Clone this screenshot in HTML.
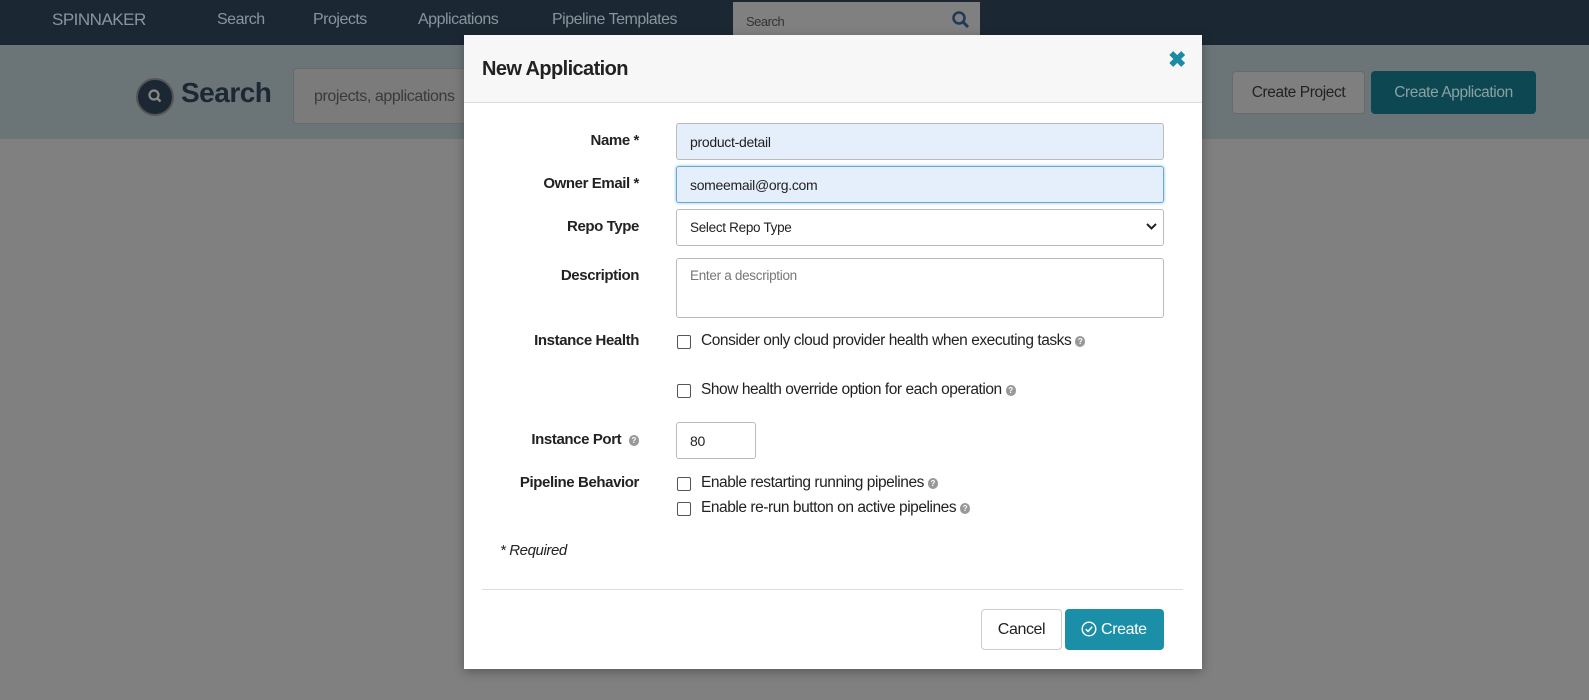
<!DOCTYPE html>
<html><head><style>
*{box-sizing:border-box;margin:0;padding:0}
body{width:1589px;height:700px;overflow:hidden;background:#808080;font-family:"Liberation Sans",sans-serif;position:relative;color:#222}
.nav{position:absolute;left:0;top:0;width:1589px;height:45px;background:#1b2732}
.nav span{position:absolute;top:11px;color:#8a949c;font-size:16px;letter-spacing:-0.5px}
.band{position:absolute;left:0;top:45px;width:1589px;height:94px;background:#6b7578}
.abs{position:absolute}
.lbl{position:absolute;right:950px;font-weight:bold;font-size:15px;letter-spacing:-0.4px;color:#222;text-align:right;white-space:nowrap}
.inp{position:absolute;left:676px;width:488px;height:37px;border:1px solid #bbb;border-radius:3px;font-size:14px;padding:10px 13px;letter-spacing:-0.3px}
.cb{position:absolute;left:677px;width:14px;height:14px;border:1px solid #555;border-radius:2px;background:#fff}
.ct{position:absolute;left:701px;font-size:15.5px;letter-spacing:-0.45px;color:#222;white-space:nowrap}
.q{display:inline-block;width:10px;height:11px;border-radius:5px;background:#999;color:#fff;font-size:8px;text-align:center;line-height:11px;font-weight:bold;vertical-align:1px;margin-left:4px;letter-spacing:0}
</style></head><body>
<div class="nav">
<span style="left:52px;font-size:17px;top:10px">SPINNAKER</span>
<span style="left:217px">Search</span>
<span style="left:313px">Projects</span>
<span style="left:418px">Applications</span>
<span style="left:552px">Pipeline Templates</span>
<div class="abs" style="left:733px;top:2px;width:247px;height:42px;background:#808080"><span style="left:13px;top:12px;font-size:13px;color:#333">Search</span>
<svg class="abs" style="left:218px;top:8px" width="20" height="20" viewBox="0 0 20 20"><circle cx="8" cy="8" r="5.5" fill="none" stroke="#1e3a56" stroke-width="2.5"/><path d="M12 12l5 5" stroke="#1e3a56" stroke-width="3"/></svg></div>
</div>
<div class="band">
<div class="abs" style="left:136px;top:33px;width:38px;height:38px;border-radius:19px;background:#1b2732;border:2px solid #555"></div>
<svg class="abs" style="left:146px;top:42px" width="18" height="18" viewBox="0 0 18 18"><circle cx="8" cy="8" r="4.5" fill="none" stroke="#888" stroke-width="2.2"/><path d="M11 11l3.5 3.5" stroke="#888" stroke-width="2.5"/></svg>
<div class="abs" style="left:181px;top:32px;font-size:28px;font-weight:bold;color:#1b2732;letter-spacing:-0.5px">Search</div>
<div class="abs" style="left:293px;top:23px;width:200px;height:56px;background:#7b7b7b;border:1px solid #6a6a6a;border-radius:4px"><span class="abs" style="left:20px;top:19px;font-size:16px;color:#3a3a3a;letter-spacing:-0.4px">projects, applications</span></div>
<div class="abs" style="left:1232px;top:26px;width:133px;height:43px;background:#7f7f7f;border:1px solid #6a6a6a;border-radius:4px;font-size:15.5px;color:#222;text-align:center;line-height:41px;letter-spacing:-0.4px">Create Project</div>
<div class="abs" style="left:1371px;top:26px;width:165px;height:43px;background:#0d4852;border-radius:4px;font-size:15.5px;color:#8aa0a5;text-align:center;line-height:43px;letter-spacing:-0.4px">Create Application</div>
</div>
<div class="abs" style="left:464px;top:35px;width:738px;height:634px;background:#fff;box-shadow:0 3px 10px rgba(0,0,0,.3)">
<div class="abs" style="left:0;top:0;width:738px;height:68px;background:#f7f7f7;border-bottom:1px solid #ddd"></div>
<div class="abs" style="left:18px;top:23px;font-size:20px;font-weight:bold;color:#222;letter-spacing:-0.6px">New Application</div>
<div class="abs" style="left:704px;top:12px;font-size:22px;font-weight:bold;color:#1a8ba3">✖</div>
</div>
<div class="lbl" style="top:132px">Name *</div>
<div class="inp" style="top:123px;background:#e5effc">product-detail</div>
<div class="lbl" style="top:175px">Owner Email *</div>
<div class="inp" style="top:166px;background:#e5effc;border-color:#66aadd;box-shadow:0 0 3px #8bc">someemail@org.com</div>
<div class="lbl" style="top:218px">Repo Type</div>
<div class="inp" style="top:209px;background:#fff;font-size:13.5px">Select Repo Type<svg class="abs" style="right:6px;top:13px" width="11" height="8" viewBox="0 0 11 8"><path d="M1 1l4.5 4.5L10 1" fill="none" stroke="#222" stroke-width="2"/></svg></div>
<div class="lbl" style="top:267px">Description</div>
<div class="inp" style="top:258px;height:60px;background:#fff;color:#777;font-size:13.5px;padding-top:9px">Enter a description</div>
<div class="lbl" style="top:332px">Instance Health</div>
<div class="cb" style="top:335px"></div><div class="ct" style="top:332px">Consider only cloud provider health when executing tasks<span class="q">?</span></div>
<div class="cb" style="top:384px"></div><div class="ct" style="top:381px">Show health override option for each operation<span class="q">?</span></div>
<div class="lbl" style="top:431px">Instance Port <span class="q">?</span></div>
<div class="inp" style="top:422px;width:80px;background:#fff">80</div>
<div class="lbl" style="top:474px">Pipeline Behavior</div>
<div class="cb" style="top:477px"></div><div class="ct" style="top:474px">Enable restarting running pipelines<span class="q">?</span></div>
<div class="cb" style="top:502px"></div><div class="ct" style="top:499px">Enable re-run button on active pipelines<span class="q">?</span></div>
<div class="abs" style="left:500px;top:542px;font-size:15px;font-style:italic;letter-spacing:-0.4px">* Required</div>
<div class="abs" style="left:482px;top:589px;width:701px;height:1px;background:#ddd"></div>
<div class="abs" style="left:981px;top:609px;width:81px;height:41px;border:1px solid #ccc;border-radius:4px;font-size:16px;text-align:center;line-height:39px;letter-spacing:-0.4px">Cancel</div>
<div class="abs" style="left:1065px;top:609px;width:99px;height:41px;background:#1b8fa8;border-radius:4px;font-size:16px;color:#fff;line-height:41px;padding-left:16px;letter-spacing:-0.4px"><svg style="vertical-align:-3px" width="16" height="16" viewBox="0 0 16 16"><circle cx="8" cy="8" r="6.8" fill="none" stroke="#fff" stroke-width="1.4"/><path d="M4.8 8.2l2.2 2.2 4.2-4.6" fill="none" stroke="#fff" stroke-width="1.5"/></svg> Create</div>
</body></html>
